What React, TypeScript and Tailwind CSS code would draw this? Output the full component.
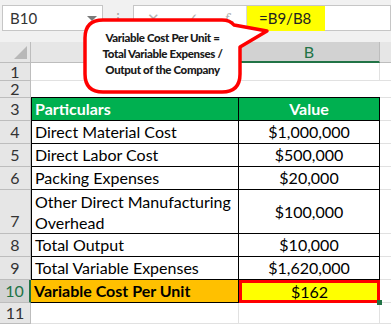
export default function App() {
  const font = { fontFamily: "Lato, 'Open Sans', sans-serif" };

  const rows = [
    { n: "4", label: "Direct Material Cost", value: "$1,000,000" },
    { n: "5", label: "Direct Labor Cost", value: "$500,000" },
    { n: "6", label: "Packing Expenses", value: "$20,000" },
  ];
  const rows2 = [
    { n: "8", label: "Total Output", value: "$10,000" },
    { n: "9", label: "Total Variable Expenses", value: "$1,620,000" },
  ];

  return (
    <div className="relative w-[391px] h-[324px] overflow-hidden bg-white text-[16px] leading-none text-black" style={font}>
      {/* Formula bar */}
      <div className="flex items-start h-[42px] bg-[#f1f1f1]">
        <div className="ml-[2px] mt-[5px] w-[101px] h-[26px] bg-white border border-[#c6c6c6] flex items-center justify-between pl-[7px] pr-[5px]">
          <span className="text-[#333] text-[15px]">B10</span>
          <span className="w-0 h-0 border-l-[5px] border-r-[5px] border-t-[5px] border-l-transparent border-r-transparent border-t-[#7a7a7a]" />
        </div>
        <div className="w-[30px] h-[36px] flex items-center justify-center text-[#a8a8a8] text-[14px]">⋮</div>
        <div className="mt-[5px] flex-1 h-[26px] bg-white border border-[#c6c6c6] flex items-center">
          <div className="w-[112px] flex items-center text-[#b5b5b5] text-[15px] pl-[13px] gap-[26px]">
            <span>✕</span>
            <span>✓</span>
            <span className="italic font-serif">f<sub className="text-[9px]">x</sub></span>
          </div>
          <div className="self-stretch w-px bg-[#d8d8d8]" />
          <div className="h-[25px] w-[78px] bg-[#ffff00] flex items-center pl-[12px] text-[#222] text-[15px]">=B9/B8</div>
        </div>
      </div>

      {/* Column headers */}
      <div className="grid grid-cols-[31px_208px_141px_1fr] h-[21px]">
        <div className="relative bg-[#e6e6e6] border-r border-b border-[#bdbdbd]">
          <div className="absolute right-[3px] bottom-[3px] w-0 h-0" style={{ borderBottom: "13px solid #b8b8b8", borderLeft: "13px solid transparent" }} />
        </div>
        <div className="bg-[#e6e6e6] border-r border-b border-[#bdbdbd] flex items-center justify-center text-[#444]">A</div>
        <div className="bg-[#d2d2d2] border-r border-[#bdbdbd] border-b-2 border-b-[#217346] flex items-center justify-center text-[#217346]">B</div>
        <div className="bg-[#e6e6e6] border-b border-[#bdbdbd]" />
      </div>

      {/* Rows */}
      <div className="grid grid-cols-[31px_208px_141px_1fr]">
        {/* row 1 */}
        <RowNum n="1" h="h-[18px]" />
        <div className="border-b border-r border-[#e1e1e1]" />
        <div className="border-b border-r border-[#e1e1e1]" />
        <div className="border-b border-[#e1e1e1]" />
        {/* row 2 */}
        <RowNum n="2" h="h-[17px]" />
        <div className="border-b border-black" />
        <div className="border-b border-black" />
        <div className="border-b border-[#e1e1e1]" />
        {/* row 3 header */}
        <RowNum n="3" h="h-[23px]" />
        <div className="bg-[#00b050] border-l border-r border-b border-black flex items-center pl-[3px] text-white font-bold">Particulars</div>
        <div className="bg-[#00b050] border-r border-b border-black flex items-center justify-center text-white font-bold">Value</div>
        <div className="border-b border-[#e1e1e1]" />
        {rows.map((r) => (
          <Row key={r.n} {...r} />
        ))}
        {/* row 7 */}
        <RowNum n="7" h="h-[44px]" align="items-end pb-[4px]" />
        <div className="border-l border-r border-b border-black pl-[3px] leading-[21px] pt-[1px]">
          Other Direct Manufacturing Overhead
        </div>
        <div className="border-r border-b border-black flex items-center justify-center">$100,000</div>
        <div className="border-b border-[#e1e1e1]" />
        {rows2.map((r) => (
          <Row key={r.n} {...r} />
        ))}
        {/* row 10 */}
        <div className="h-[23px] bg-[#d2d2d2] border-b border-[#bdbdbd] border-r-2 border-r-[#217346] flex items-center justify-center text-[#217346]">10</div>
        <div className="bg-[#ffc000] border-r border-b border-black flex items-center pl-[3px] font-bold">Variable Cost Per Unit</div>
        <div className="relative bg-[#ffff00] border-[3px] border-[#ff0000] flex items-center justify-center">
          $162
          <div className="absolute -right-[5px] -bottom-[5px] w-[5px] h-[5px] bg-[#217346]" />
        </div>
        <div className="border-b border-[#e1e1e1]" />
        {/* row 11 */}
        <RowNum n="11" h="h-[21px]" />
        <div className="border-b border-r border-[#e1e1e1]" />
        <div className="border-b border-r border-[#e1e1e1]" />
        <div className="border-b border-[#e1e1e1]" />
      </div>

      {/* Callout */}
      <svg className="absolute left-0 top-0 pointer-events-none" width="391" height="100" viewBox="0 0 391 100">
        <path
          d="M103 20 H222 Q230 20 234 25 L267 31 L240 47 V74 Q240 92 222 92 H103 Q85 92 85 74 V38 Q85 20 103 20 Z"
          fill="white"
          stroke="#ff0000"
          strokeWidth="3.5"
          strokeLinejoin="round"
        />
      </svg>
      <div className="absolute left-[85px] top-[30px] w-[155px] text-center font-black text-[11.5px] leading-[16px] tracking-[-0.35px] text-[#1a1a1a]">
        Variable Cost Per Unit =<br />
        Total Variable Expenses /<br />
        Output of the Company
      </div>
    </div>
  );
}

function RowNum({ n, h, align = "items-center" }: { n: string; h: string; align?: string }) {
  return (
    <div className={`${h} bg-[#e6e6e6] border-r border-b border-[#bdbdbd] flex ${align} justify-center text-[#333]`}>
      {n}
    </div>
  );
}

function Row({ n, label, value }: { n: string; label: string; value: string }) {
  return (
    <>
      <RowNum n={n} h="h-[23px]" />
      <div className="border-l border-r border-b border-black flex items-center pl-[3px]">{label}</div>
      <div className="border-r border-b border-black flex items-center justify-center">{value}</div>
      <div className="border-b border-[#e1e1e1]" />
    </>
  );
}
